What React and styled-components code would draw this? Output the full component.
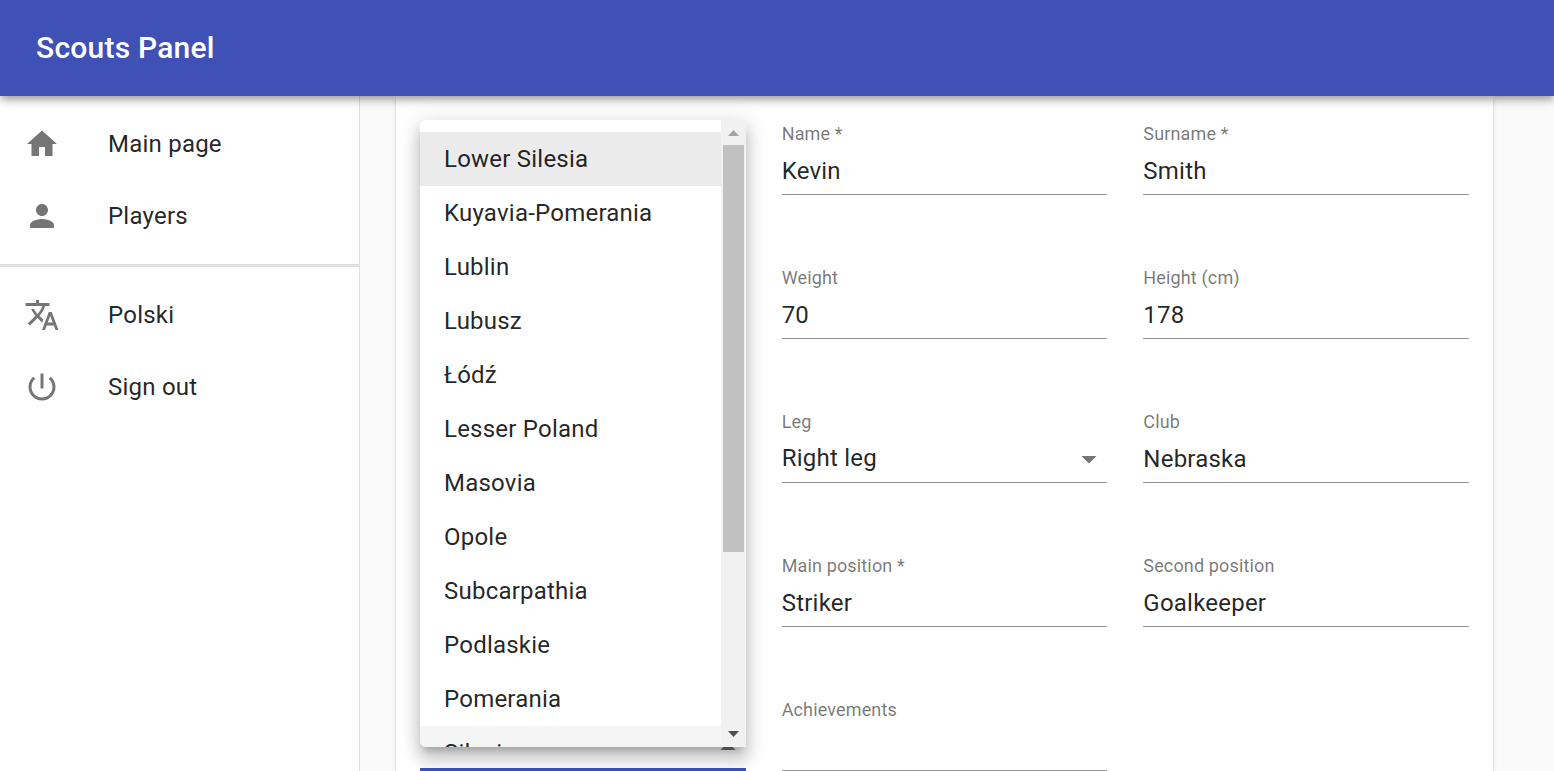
import React from "react";
import styled, { createGlobalStyle } from "styled-components";

const GlobalStyle = createGlobalStyle`
  *, *::before, *::after { box-sizing: border-box; }
  body {
    margin: 0;
    background: #fafafa;
    color: rgba(0, 0, 0, 0.87);
    font-family: Roboto, "Liberation Sans", sans-serif;
    font-size: 24px;
    letter-spacing: 0.00938em;
    overflow: hidden;
  }
`;

const Page = styled.div`
  display: flex;
  flex-direction: column;
  height: 100vh;
  overflow: hidden;
`;

const AppBar = styled.header`
  position: relative;
  z-index: 2;
  flex: none;
  display: flex;
  align-items: center;
  height: 96px;
  padding: 0 36px;
  background: #3f51b5;
  color: #fff;
  box-shadow: 0 3px 6px -1.5px rgba(0, 0, 0, 0.2), 0 6px 7.5px 0 rgba(0, 0, 0, 0.14),
    0 1.5px 15px 0 rgba(0, 0, 0, 0.12);
`;

const Title = styled.h1`
  margin: 0;
  font-size: 30px;
  font-weight: 500;
  line-height: 1.6;
  letter-spacing: 0.0075em;
`;

const Body = styled.div`
  display: flex;
  flex: 1;
  min-height: 0;
`;

const Sidebar = styled.nav`
  flex: none;
  width: 360px;
  background: #fff;
  border-right: 1px solid rgba(0, 0, 0, 0.12);
`;

const NavList = styled.ul`
  margin: 0;
  padding: 12px 0;
  list-style: none;
`;

const NavItem = styled.li`
  display: flex;
  align-items: center;
  height: 72px;
  padding: 0 24px;
  line-height: 36px;
`;

const NavIcon = styled.svg`
  width: 36px;
  height: 36px;
  margin-right: 48px;
  fill: rgba(0, 0, 0, 0.54);
`;

const Divider = styled.hr`
  height: 3px;
  margin: 0;
  border: 0;
  background: #e0e0e0;
`;

const Main = styled.main`
  flex: 1;
  padding: 0 61px 0 36px;
`;

const Card = styled.section`
  height: 100%;
  padding: 27px 24px 0;
  background: #fff;
  box-shadow: 0 3px 1.5px -1.5px rgba(0, 0, 0, 0.2), 0 1.5px 1.5px 0 rgba(0, 0, 0, 0.14),
    0 1.5px 4.5px 0 rgba(0, 0, 0, 0.12);
`;

const FormGrid = styled.form`
  position: relative;
  display: grid;
  grid-template-columns: repeat(3, 1fr);
  grid-auto-rows: 72px;
  gap: 72px 36px;
`;

const FieldBox = styled.div`
  grid-column: ${(p) => p.$column};
  grid-row: ${(p) => p.$row};
  display: flex;
  flex-direction: column;
  padding-top: 2px;
  border-bottom: ${(p) => (p.$focused ? "3px solid #3f51b5" : "1px solid #949494")};
`;

const Label = styled.label`
  height: 18px;
  font-size: 18px;
  line-height: 18px;
  letter-spacing: 0.15px;
  color: rgba(0, 0, 0, 0.54);
`;

const Value = styled.div`
  display: flex;
  justify-content: space-between;
  padding-top: ${(p) => (p.$select ? 13 : 14)}px;
  line-height: 28.5px;
`;

const Caret = styled.svg`
  flex: none;
  width: 36px;
  height: 36px;
  margin: ${(p) => (p.$open ? "-3px 0 0 auto" : "-3px 0 0")};
  fill: rgba(0, 0, 0, 0.54);
  transform: ${(p) => (p.$open ? "rotate(180deg)" : "none")};
`;

const Menu = styled.div`
  position: absolute;
  top: -3px;
  left: 0;
  display: flex;
  width: 326px;
  height: 627px;
  overflow: hidden;
  background: #fff;
  border-radius: 6px 0 0 6px;
  box-shadow: 0 7.5px 7.5px -4.5px rgba(0, 0, 0, 0.2), 0 12px 15px 1.5px rgba(0, 0, 0, 0.14),
    0 4.5px 21px 3px rgba(0, 0, 0, 0.12);
`;

const Options = styled.ul`
  flex: 1;
  margin: 0;
  padding: 12px 0;
  list-style: none;
`;

const Option = styled.li`
  height: 54px;
  padding: 9px 24px;
  line-height: 36px;
  background: ${(p) => (p.$active ? "#ebebeb" : p.$hinted ? "#f5f5f5" : "transparent")};
`;

const Scrollbar = styled.div`
  display: flex;
  flex-direction: column;
  align-items: center;
  width: 25px;
  background: #f1f1f1;
`;

const ScrollThumb = styled.div`
  width: 21px;
  height: 407px;
  background: #c1c1c1;
`;

const ScrollArrow = styled.svg`
  width: 25px;
  height: 25px;
  fill: ${(p) => (p.$enabled ? "#505050" : "#a3a3a3")};
  margin-top: ${(p) => (p.$enabled ? "auto" : "0")};
`;

const ICONS = {
  home: "M10 20v-6h4v6h5v-8h3L12 3 2 12h3v8z",
  person:
    "M12 12c2.21 0 4-1.79 4-4s-1.79-4-4-4-4 1.79-4 4 1.79 4 4 4zm0 2c-2.67 0-8 1.34-8 4v2h16v-2c0-2.66-5.33-4-8-4z",
  translate:
    "M12.87 15.07l-2.54-2.51.03-.03c1.74-1.94 2.98-4.17 3.71-6.53H17V4h-7V2H8v2H1v1.99h11.17C11.5 7.92 10.44 9.75 9 11.35 8.07 10.32 7.3 9.19 6.69 8h-2c.73 1.63 1.73 3.17 2.98 4.56l-5.09 5.02L4 19l5-5 3.11 3.11.76-2.04zM18.5 10h-2L12 22h2l1.12-3h4.75L21 22h2l-4.5-12zm-2.62 7l1.62-4.33L19.12 17h-3.24z",
  power:
    "M13 3h-2v10h2V3zm4.83 2.17l-1.42 1.42C17.99 7.86 19 9.81 19 12c0 3.87-3.13 7-7 7s-7-3.13-7-7c0-2.19 1.01-4.14 2.58-5.42L6.17 5.17C4.23 6.82 3 9.26 3 12c0 4.97 4.03 9 9 9s9-4.03 9-9c0-2.74-1.23-5.18-3.17-6.83z",
};

const NAV_GROUPS = [
  [
    { icon: "home", label: "Main page" },
    { icon: "person", label: "Players" },
  ],
  [
    { icon: "translate", label: "Polski" },
    { icon: "power", label: "Sign out" },
  ],
];

const FIELDS = [
  { label: "Name *", value: "Kevin", column: 2, row: 1 },
  { label: "Surname *", value: "Smith", column: 3, row: 1 },
  { label: "Weight", value: "70", column: 2, row: 2 },
  { label: "Height (cm)", value: "178", column: 3, row: 2 },
  { label: "Leg", value: "Right leg", column: 2, row: 3, select: true },
  { label: "Club", value: "Nebraska", column: 3, row: 3 },
  { label: "Main position *", value: "Striker", column: 2, row: 4 },
  { label: "Second position", value: "Goalkeeper", column: 3, row: 4 },
  { label: "Achievements", value: "", column: 2, row: 5 },
];

const DISTRICTS = [
  "Lower Silesia",
  "Kuyavia-Pomerania",
  "Lublin",
  "Lubusz",
  "Łódź",
  "Lesser Poland",
  "Masovia",
  "Opole",
  "Subcarpathia",
  "Podlaskie",
  "Pomerania",
  "Silesia",
];

function Field({ label, value, column, row, select }) {
  return (
    <FieldBox $column={column} $row={row}>
      <Label>{label}</Label>
      <Value $select={select}>
        <span>{value}</span>
        {select && (
          <Caret viewBox="0 0 24 24">
            <path d="M7 10l5 5 5-5z" />
          </Caret>
        )}
      </Value>
    </FieldBox>
  );
}

function DistrictMenu() {
  return (
    <Menu>
      <Options>
        {DISTRICTS.map((name, i) => (
          <Option key={name} $active={i === 0} $hinted={name === "Silesia"}>
            {name}
          </Option>
        ))}
      </Options>
      <Scrollbar>
        <ScrollArrow viewBox="0 0 25 25">
          <path d="M7 16L12.5 10L18 16z" />
        </ScrollArrow>
        <ScrollThumb />
        <ScrollArrow viewBox="0 0 25 25" $enabled>
          <path d="M7 9L12.5 15L18 9z" />
        </ScrollArrow>
      </Scrollbar>
    </Menu>
  );
}

export default function App() {
  return (
    <Page>
      <GlobalStyle />
      <AppBar>
        <Title>Scouts Panel</Title>
      </AppBar>
      <Body>
        <Sidebar>
          {NAV_GROUPS.map((group, i) => (
            <React.Fragment key={i}>
              {i > 0 && <Divider />}
              <NavList>
                {group.map((item) => (
                  <NavItem key={item.label}>
                    <NavIcon viewBox="0 0 24 24">
                      <path d={ICONS[item.icon]} />
                    </NavIcon>
                    {item.label}
                  </NavItem>
                ))}
              </NavList>
            </React.Fragment>
          ))}
        </Sidebar>
        <Main>
          <Card>
            <FormGrid>
              {FIELDS.map((field) => (
                <Field key={field.label} {...field} />
              ))}
              <FieldBox $column={1} $row={5} $focused>
                <Label />
                <Value $select>
                  <Caret viewBox="0 0 24 24" $open>
                    <path d="M7 10l5 5 5-5z" />
                  </Caret>
                </Value>
              </FieldBox>
              <DistrictMenu />
            </FormGrid>
          </Card>
        </Main>
      </Body>
    </Page>
  );
}
